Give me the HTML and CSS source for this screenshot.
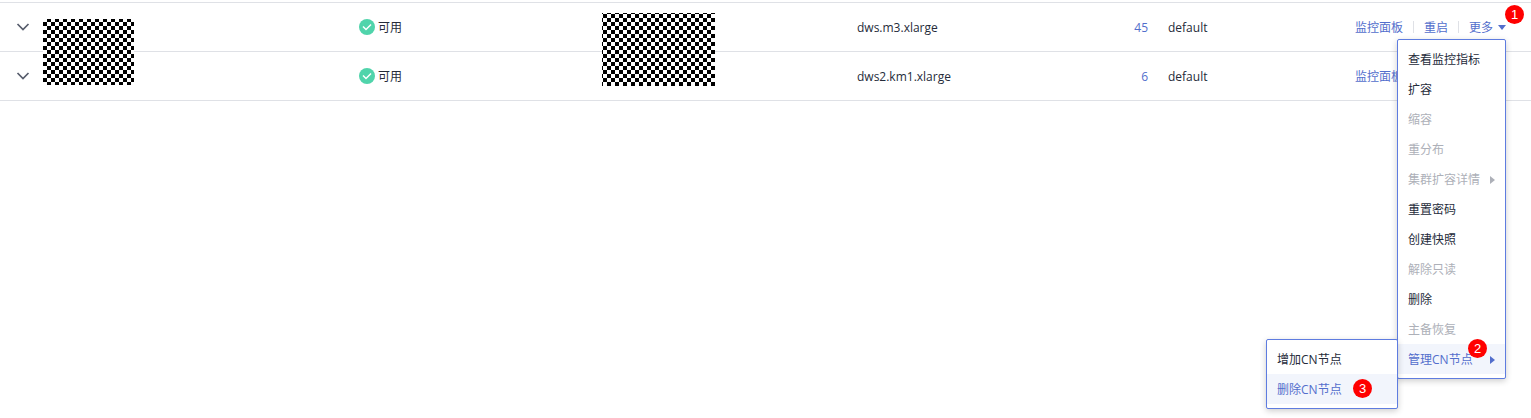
FILE: index.html
```html
<!DOCTYPE html>
<html lang="zh-CN">
<head>
  <meta charset="UTF-8" />
  <meta name="viewport" content="width=device-width, initial-scale=1.0" />
  <title>集群管理</title>
  <link rel="stylesheet" href="styles.css">
</head>
<body>

  <table class="cluster-table">
    <colgroup>
      <col class="col-expand">
      <col>
      <col class="col-status">
      <col class="col-version">
      <col class="col-flavor">
      <col class="col-count">
      <col class="col-project">
      <col class="col-actions">
    </colgroup>
    <tbody>
      <tr>
        <td>
          <button type="button" class="expand-btn" aria-label="展开">
            <svg width="14" height="8" viewBox="0 0 14 8"><path d="M1.5 1L7 6.5L12.5 1" /></svg>
          </button>
        </td>
        <td class="masked"><span class="mask mask-name"></span></td>
        <td>
          <span class="status">
            <svg width="16" height="16" viewBox="0 0 16 16"><circle cx="8" cy="8" r="8" /><path d="M4 7.5l3 3 5-5" /></svg>
            可用
          </span>
        </td>
        <td class="masked"><span class="mask mask-version"></span></td>
        <td>dws.m3.xlarge</td>
        <td class="count"><a href="#">45</a></td>
        <td>default</td>
        <td>
          <div class="actions">
            <a href="#">监控面板</a>
            <a href="#">重启</a>
            <div class="more">
              <button type="button" class="more-btn">更多<span class="caret-down"></span></button>
              <span class="step step-more">1</span>
              <ul class="menu">
                <li><button type="button">查看监控指标</button></li>
                <li><button type="button">扩容</button></li>
                <li><button type="button" disabled>缩容</button></li>
                <li><button type="button" disabled>重分布</button></li>
                <li><button type="button" disabled>集群扩容详情<span class="caret-right"></span></button></li>
                <li><button type="button">重置密码</button></li>
                <li><button type="button">创建快照</button></li>
                <li><button type="button" disabled>解除只读</button></li>
                <li><button type="button">删除</button></li>
                <li><button type="button" disabled>主备恢复</button></li>
                <li>
                  <button type="button" class="active">管理CN节点<span class="caret-right"></span></button>
                  <span class="step step-manage">2</span>
                  <ul class="menu submenu">
                    <li><button type="button">增加CN节点</button></li>
                    <li>
                      <button type="button" class="active">删除CN节点</button>
                      <span class="step step-delete">3</span>
                    </li>
                  </ul>
                </li>
              </ul>
            </div>
          </div>
        </td>
      </tr>
      <tr>
        <td>
          <button type="button" class="expand-btn" aria-label="展开">
            <svg width="14" height="8" viewBox="0 0 14 8"><path d="M1.5 1L7 6.5L12.5 1" /></svg>
          </button>
        </td>
        <td></td>
        <td>
          <span class="status">
            <svg width="16" height="16" viewBox="0 0 16 16"><circle cx="8" cy="8" r="8" /><path d="M4 7.5l3 3 5-5" /></svg>
            可用
          </span>
        </td>
        <td></td>
        <td>dws2.km1.xlarge</td>
        <td class="count"><a href="#">6</a></td>
        <td>default</td>
        <td>
          <div class="actions">
            <a href="#">监控面板</a>
          </div>
        </td>
      </tr>
    </tbody>
  </table>

</body>
</html>
```
FILE: styles.css
```css
* {
  box-sizing: border-box;
}
body {
  min-height: 100vh;
  margin: 0;
  padding-top: 2px;
  background-color: #fff;
  color: #252b3a;
  font-family: "Open Sans", "Noto Sans CJK SC", sans-serif;
  font-size: 12px;
  line-height: 19px;
}
a {
  color: #526ecc;
  text-decoration: none;
}
button {
  padding: 0;
  border: none;
  background: none;
  color: inherit;
  font: inherit;
  cursor: pointer;
}

/* Cluster list */
.cluster-table {
  width: 100%;
  table-layout: fixed;
  border-collapse: separate;
  border-spacing: 0;
  border-top: 1px solid #dfe1e6;
}
.cluster-table td {
  height: 49px;
  padding: 0 10px;
  border-bottom: 1px solid #dfe1e6;
  white-space: nowrap;
}
.col-expand { width: 33px; }
.col-status { width: 243px; }
.col-version { width: 255px; }
.col-flavor { width: 211px; }
.col-count { width: 100px; }
.col-project { width: 187px; }
.col-actions { width: 186px; }

.cluster-table .count {
  text-align: right;
}
.expand-btn {
  display: block;
  margin-left: 6px;
}
.expand-btn svg {
  display: block;
  fill: none;
  stroke: #575d6c;
  stroke-width: 1.7;
}
.status {
  display: flex;
  align-items: center;
  gap: 3px;
}
.status circle {
  fill: #50d4ab;
}
.status path {
  fill: none;
  stroke: #fff;
  stroke-width: 1.5;
}

/* Hidden data, spans both rows */
.masked {
  position: relative;
}
.mask {
  position: absolute;
  left: 10px;
  background-image: repeating-conic-gradient(#000 0 25%, #fff 0 50%);
  background-size: 8px 8px;
}
.mask-name {
  top: 16px;
  width: 91px;
  height: 66px;
  background-position: 0 -1px;
}
.mask-version {
  top: 10px;
  width: 113px;
  height: 73px;
  background-position: 5px 1px;
}

/* Row actions */
.actions {
  display: flex;
  align-items: center;
}
.actions > * + * {
  display: flex;
  align-items: center;
}
.actions > * + *::before {
  content: "";
  width: 1px;
  height: 12px;
  margin: 0 10px;
  background-color: #dfe1e6;
}
.more {
  position: relative;
}
.more-btn {
  display: flex;
  align-items: center;
  gap: 5px;
  color: #526ecc;
}
.caret-down {
  border: 4px solid transparent;
  border-top: 5px solid #526ecc;
  border-bottom: none;
}
.caret-right {
  border: 4px solid transparent;
  border-left: 5px solid;
  border-right: none;
}

/* Drop-down menu */
.menu {
  position: absolute;
  top: 21px;
  right: 0;
  z-index: 10;
  width: 109px;
  margin: 0;
  padding: 4px 0;
  border: 1px solid #5e7ce0;
  border-radius: 2px;
  background-color: #fff;
  box-shadow: 0 2px 6px rgba(0, 0, 0, 0.2);
  color: #252b3a;
  list-style: none;
}
.menu li {
  position: relative;
}
.menu button {
  display: flex;
  align-items: center;
  justify-content: space-between;
  width: 100%;
  height: 30px;
  padding: 2px 10px 0;
}
.menu button:disabled {
  color: #adb0b8;
  cursor: default;
}
.menu .active {
  background-color: #f2f5fc;
  color: #526ecc;
}
.submenu {
  top: -5px;
  right: 107px;
  width: 132px;
}

/* Step markers */
.step {
  position: absolute;
  z-index: 20;
  width: 19px;
  height: 19px;
  border-radius: 50%;
  background-color: #f00;
  color: #fff;
  font-family: "Liberation Sans", Arial, sans-serif;
  font-size: 13px;
  line-height: 19px;
  text-align: center;
}
.step-more {
  top: -13px;
  right: -18px;
}
.step-manage {
  top: -5px;
  right: 18px;
}
.step-delete {
  top: 5px;
  right: 25px;
}
```
